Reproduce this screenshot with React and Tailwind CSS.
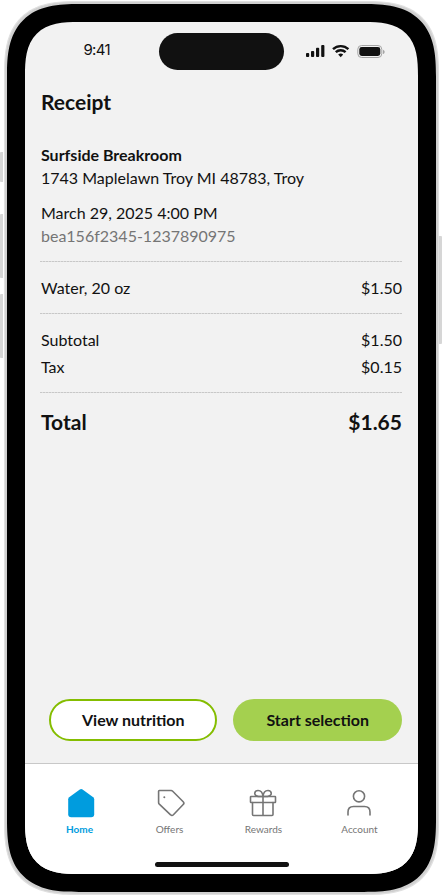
import React from "react";

function StatusBar() {
  return (
    <div className="flex h-[59px] shrink-0 items-start pt-[11px]">
      <div className="w-[134px] pl-[58.5px] pt-[6px] font-['Inter',sans-serif] text-[15px] leading-[22px] tracking-[-0.7px]">9:41</div>
      <div className="h-[37px] w-[125px] rounded-full bg-[#111111]" />
      <div className="flex pl-[22px] pt-[11px]">
        <svg width="80" height="15" viewBox="306 44 80 15" fill="#111111">
          <rect x="306" y="53" width="3.2" height="4" rx="0.9" />
          <rect x="311" y="51" width="3.2" height="6" rx="0.9" />
          <rect x="316" y="47.8" width="3.2" height="9.2" rx="0.9" />
          <rect x="321.2" y="45" width="3.2" height="12" rx="0.9" />
          <g fill="none" stroke="#111111" strokeWidth="2.4">
            <path d="M333 49.2A11.2 11.2 0 0 1 348.400 49.200" />
            <path d="M335.800 52.200A7.100 7.100 0 0 1 345.600 52.200" />
          </g>
          <path d="M338.200 54.600Q340.700 52.500 343.200 54.600L340.700 57.200Z" />
          <rect x="357.8" y="45.500" width="24" height="12" rx="3.8" fill="none" stroke="#a5a5a5" />
          <rect x="359.300" y="47" width="21" height="9" rx="2.400" />
          <path d="M383 49.700C385.200 50.600 385.200 53.200 383 54.100Z" fill="#a5a5a5" />
        </svg>
      </div>
    </div>
  );
}

function Row({ label, value }) {
  return (
    <div className="flex justify-between">
      <span>{label}</span>
      <span>{value}</span>
    </div>
  );
}

function Divider() {
  return (
    <svg className="-ml-px block shrink-0" width="362" height="1">
      <line x1="0" y1="0.5" x2="362" y2="0.5" stroke="#dedede" />
      <line x1="0" y1="0.5" x2="362" y2="0.5" stroke="#c8c8c8" strokeDasharray="2 1" />
    </svg>
  );
}

function Tab({ label, active, children }) {
  return (
    <div className={active ? "flex flex-col items-center font-bold text-[#009cde]" : "flex flex-col items-center text-[#757575]"}>
      <svg width="32" height="32" viewBox="0 0 32 32" fill="none" stroke="currentColor" strokeWidth="1.6" strokeLinecap="round" strokeLinejoin="round" overflow="visible">
        {children}
      </svg>
      <span className="mt-[4px] text-[10px] leading-[13px]">{label}</span>
    </div>
  );
}

function TabBar() {
  return (
    <nav className="flex h-[111px] shrink-0 flex-col items-center border-t border-[#c8c8c8] bg-white">
      <div className="grid w-full grid-cols-[109px_71px_117px_75px] pt-[23px]">
        <Tab label="Home" active>
          <path transform="translate(2.200 0.2)" d="M16 1.800Q16.700 1.800 17.400 2.300L28 10Q29 10.800 29 12V27Q29 30 26 30H6Q3 30 3 27V12Q3 10.800 4 10L14.600 2.300Q15.300 1.800 16 1.800Z" fill="currentColor" stroke="none" />
        </Tab>
        <Tab label="Offers">
          <path transform="translate(1.8 0)" d="M4.500 3.500H16.300Q17.200 3.500 17.900 4.200L28.400 14.700Q29.800 16.100 28.400 17.500L18.600 27.800Q17.200 29.200 15.800 27.800L4.500 17.100Q3.800 16.400 3.800 15.500V4.200Q3.800 3.500 4.500 3.500Z" />
          <circle cx="11.300" cy="10.300" r="1" fill="currentColor" stroke="none" />
        </Tab>
        <Tab label="Rewards">
          <rect x="3.500" y="9.500" width="25" height="6" rx="0.500" />
          <path d="M5.500 15.500V27.500Q5.500 28.500 6.500 28.500H25Q26 28.500 26 27.500V15.500M16 9.500V28.500M16 9.500H11.500Q7.700 8.800 7.700 6.300Q8 3.500 11 3.500Q15.500 3.500 16 9.500Q16.500 3.500 21 3.500Q24 3.500 24.300 6.300Q24.300 8.800 20.500 9.500Z" />
        </Tab>
        <Tab label="Account">
          <circle cx="16" cy="9.300" r="5.600" />
          <path d="M5 28V25Q5 19.500 10.500 19.500H21.500Q27 19.500 27 25V28" />
        </Tab>
      </div>
      <div className="ml-px mt-[26px] h-[5px] w-[134px] rounded-full bg-[#111111]" />
    </nav>
  );
}

export default function App() {
  return (
    <div className="relative h-[896px] w-[443px] overflow-hidden bg-white pl-[3.7px] pt-px font-['Lato',sans-serif] text-[16px] text-[#111111]">
      <div className="absolute left-0 top-[152px] h-[30px] w-[3px] rounded-l-[1px] bg-[#d6d6d6]" />
      <div className="absolute left-0 top-[214px] h-[64px] w-[3px] rounded-l-[1px] bg-[#d6d6d6]" />
      <div className="absolute left-0 top-[294px] h-[64px] w-[3px] rounded-l-[1px] bg-[#d6d6d6]" />
      <div className="absolute left-[439px] top-[236px] h-[108px] w-[3px] rounded-r-[1px] bg-[#d6d6d6]" />
      <div className="relative h-[894px] w-[435.6px] rounded-[74px] border border-[#e0e0e0] bg-[#d0d0d0] px-[2.3px] py-[2px] [corner-shape:superellipse(1.45)]">
        <div className="h-[888px] w-[429px] rounded-[72px] bg-black p-[18px] [corner-shape:superellipse(1.45)]">
          <div className="flex h-[852px] w-[393px] flex-col overflow-hidden rounded-[54px] bg-[#f2f2f2] [corner-shape:superellipse(1.5)]">
            <StatusBar />
            <main className="flex flex-1 flex-col px-4">
              <h1 className="mt-[6px] text-[21px] font-bold leading-[30px]">Receipt</h1>
              <div className="mt-[26px] leading-[23px]">
                <div className="font-bold">Surfside Breakroom</div>
                <div>1743 Maplelawn Troy MI 48783, Troy</div>
              </div>
              <div className="mt-[12px] leading-[23px]">
                <div>March 29, 2025 4:00 PM</div>
                <div className="text-[#757575]">bea156f2345-1237890975</div>
              </div>
              <div className="mt-[14px]"><Divider /></div>
              <div className="my-[13px] leading-[25px]"><Row label="Water, 20 oz" value="$1.50" /></div>
              <Divider />
              <div className="my-[12px] leading-[27px]">
                <Row label="Subtotal" value="$1.50" />
                <Row label="Tax" value="$0.15" />
              </div>
              <Divider />
              <div className="mt-[14px] text-[21px] font-bold leading-[30px]"><Row label="Total" value="$1.65" /></div>
              <div className="mb-[22px] mt-auto grid grid-cols-2 gap-4 pl-2">
                <button className="h-[42px] rounded-full border-2 border-[#84bd00] bg-white font-bold">View nutrition</button>
                <button className="h-[42px] rounded-full bg-[#a4d04f] font-bold">Start selection</button>
              </div>
            </main>
            <TabBar />
          </div>
        </div>
      </div>
    </div>
  );
}
